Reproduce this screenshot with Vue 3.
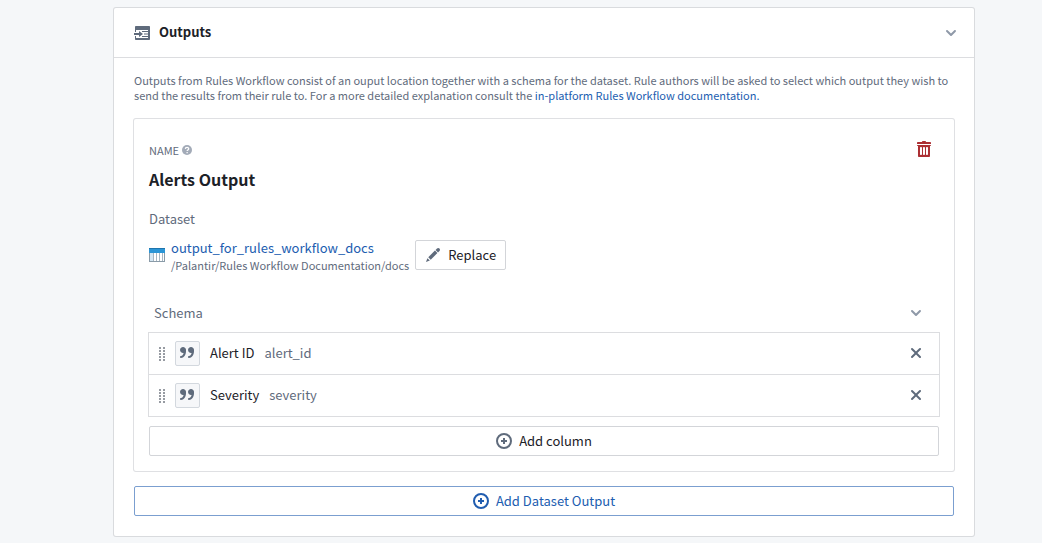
<script setup>
import { ref } from 'vue'

const open = ref(true)
const schemaOpen = ref(true)
const columns = ref([
  { label: 'Alert ID', key: 'alert_id' },
  { label: 'Severity', key: 'severity' },
])
const dots = [0, 1, 2, 3, 4]

function removeColumn(index) {
  columns.value.splice(index, 1)
}
</script>

<template>
  <main class="page">
    <section class="card">
      <header class="card-header">
        <svg class="icon muted" viewBox="0 0 16 16" aria-hidden="true">
          <path fill-rule="evenodd" d="M2 1h13c.55 0 1 .45 1 1v12c0 .55-.45 1-1 1H2c-.55 0-1-.45-1-1v-3h1v2h12V5H2v2H1V2c0-.55.45-1 1-1z" />
          <path d="M0 8h5V6l4 3-4 3v-2H0zM8 6h6v1H8zM10 8.500h4v1h-4zM8 11h6v1H8z" />
        </svg>
        <h2 class="card-title">Outputs</h2>
        <button class="icon-button" type="button" aria-label="Toggle outputs" :aria-expanded="open" @click="open = !open">
          <svg class="icon soft" viewBox="0 0 16 16" aria-hidden="true">
            <path d="M12 5c-.28 0-.53.11-.71.29L8 8.59l-3.29-3.3a1.003 1.003 0 00-1.42 1.42l4 4c.18.18.43.29.71.29s.53-.11.71-.29l4-4A1.003 1.003 0 0012 5z" />
          </svg>
        </button>
      </header>

      <div v-if="open" class="card-body">
        <p class="description">
          Outputs from Rules Workflow consist of an ouput location together with a schema for the dataset. Rule authors will be asked to select which output they wish to send the results from their rule to. For a more detailed explanation consult the <a href="#docs">in-platform Rules Workflow documentation.</a>
        </p>

        <article class="output">
          <div class="output-top">
            <div class="name">
              <span>NAME</span>
              <svg class="help" viewBox="0 0 16 16" aria-hidden="true">
                <circle cx="8" cy="8" r="8" />
                <path d="M5.300 6.200C5.400 2.800 10.800 2.900 10.700 6c0 1.900-2.500 2-2.500 3.700" />
                <path d="M8.200 11.200v2" />
              </svg>
            </div>
            <button class="icon-button" type="button" aria-label="Delete output">
              <svg class="icon danger" viewBox="0 0 16 16" aria-hidden="true">
                <path fill-rule="evenodd" d="M14.490 3.990h-13c-.28 0-.5.22-.5.5s.22.5.5.5h.5v10c0 .55.45 1 1 1h10c.55 0 1-.45 1-1v-10h.5c.28 0 .5-.22.5-.5s-.22-.5-.5-.5zm-8.500 9c0 .55-.45 1-1 1s-1-.45-1-1v-6c0-.55.45-1 1-1s1 .45 1 1v6zm3 0c0 .55-.45 1-1 1s-1-.45-1-1v-6c0-.55.45-1 1-1s1 .45 1 1v6zm3 0c0 .55-.45 1-1 1s-1-.45-1-1v-6c0-.55.45-1 1-1s1 .45 1 1v6z" />
                <path d="M14 1h-4c0-.55-.45-1-1-1H7c-.55 0-1 .45-1 1H2c-.55 0-1 .45-1 1v1h14V2c0-.55-.45-1-1-1z" />
              </svg>
            </button>
          </div>
          <h3 class="output-title">Alerts Output</h3>
          <div class="label">Dataset</div>

          <div class="dataset">
            <svg class="icon" viewBox="0 0 16 16" aria-hidden="true">
              <path fill="#8a9ba8" d="M0 1h16v14H0z" />
              <path fill="#fff" d="M1 6h14v8H1z" />
              <path fill="#d3e6f3" d="M1 6h3v8H1z" />
              <path fill="#2b95d6" d="M0 1h16v5H0z" />
              <path fill="#1f75ad" d="M0 1h16v1H0z" />
              <path fill="#a7b6c2" d="M4 6h1v8H4zM7 6h1v8H7zM10 6h1v8h-1zM13 6h1v8h-1z" />
            </svg>
            <div class="dataset-text">
              <a class="dataset-name" href="#dataset">output_for_rules_workflow_docs</a>
              <span class="dataset-path">/Palantir/Rules Workflow Documentation/docs</span>
            </div>
            <button class="button" type="button">
              <svg class="icon muted" viewBox="0 0 16 16" aria-hidden="true">
                <path d="M3.250 10.260l2.470 2.470 6.690-6.690-2.460-2.480-6.700 6.700zM.99 14.990l3.860-1.390-2.460-2.440L.99 14.990zm12.250-14c-.48 0-.92.2-1.240.51l-1.440 1.440 2.470 2.470 1.440-1.440c.32-.32.51-.75.51-1.240.01-.95-.77-1.740-1.740-1.740z" />
              </svg>
              Replace
            </button>
          </div>

          <div class="schema-header">
            <span>Schema</span>
            <button class="icon-button" type="button" aria-label="Toggle schema" :aria-expanded="schemaOpen" @click="schemaOpen = !schemaOpen">
              <svg class="icon soft" viewBox="0 0 16 16" aria-hidden="true">
                <path d="M12 5c-.28 0-.53.11-.71.29L8 8.59l-3.29-3.3a1.003 1.003 0 00-1.42 1.42l4 4c.18.18.43.29.71.29s.53-.11.71-.29l4-4A1.003 1.003 0 0012 5z" />
              </svg>
            </button>
          </div>

          <ul v-if="schemaOpen" class="columns">
            <li v-for="(column, index) in columns" :key="column.key" class="column">
              <svg class="icon handle" viewBox="0 0 16 16" aria-hidden="true">
                <path v-for="n in dots" :key="n" :d="`M5 ${n * 3 + 1}h2v2H5zM9 ${n * 3 + 1}h2v2H9z`" />
              </svg>
              <span class="type">
                <svg class="icon muted" viewBox="0 0 16 16" aria-hidden="true">
                  <path d="M15.020 5c0-1.660-1.340-3-3-3s-3 1.340-3 3a2.996 2.996 0 003.600 2.940C12.100 9.760 11.140 11 10.020 11c-.55 0-1 .45-1 1s.45 1 1 1c2.760 0 5-3.130 5-7 0-.2-.02-.39-.04-.58.02-.14.04-.28.04-.42zm-11-3c-1.660 0-3 1.340-3 3a2.996 2.996 0 003.600 2.940C4.100 9.760 3.140 11 2.020 11c-.55 0-1 .45-1 1s.45 1 1 1c2.760 0 5-3.130 5-7 0-.2-.02-.39-.04-.58.02-.14.04-.28.04-.42 0-1.660-1.350-3-3-3z" />
                </svg>
              </span>
              <span class="column-label">{{ column.label }}</span>
              <span class="column-key">{{ column.key }}</span>
              <button class="icon-button remove" type="button" :aria-label="`Remove ${column.label}`" @click="removeColumn(index)">
                <svg class="icon muted" viewBox="0 0 16 16" aria-hidden="true">
                  <path d="M9.410 8l3.290-3.290c.19-.18.3-.43.3-.71a1.003 1.003 0 00-1.710-.71L8 6.590l-3.290-3.300a1.003 1.003 0 00-1.420 1.420L6.590 8 3.300 11.290c-.19.18-.3.43-.3.71a1.003 1.003 0 001.710.71L8 9.410l3.290 3.290c.18.19.43.3.71.3a1.003 1.003 0 00.71-1.710L9.410 8z" />
                </svg>
              </button>
            </li>
          </ul>

          <button class="button wide" type="button">
            <svg class="icon muted line" viewBox="0 0 16 16" aria-hidden="true">
              <circle cx="8" cy="8" r="7" />
              <path d="M8 5v6M5 8h6" />
            </svg>
            Add column
          </button>
        </article>

        <button class="button wide primary" type="button">
          <svg class="icon line" viewBox="0 0 16 16" aria-hidden="true">
            <circle cx="8" cy="8" r="7" />
            <path d="M8 5v6M5 8h6" />
          </svg>
          Add Dataset Output
        </button>
      </div>
    </section>
  </main>
</template>

<style>
html,
body {
  background: #f5f7f9;
}
</style>

<style scoped>
.page {
  padding: 8px 68px 7px 114px;
  color: #1c2127;
  font-family: "Noto Sans CJK SC", "Noto Sans", sans-serif;
  font-size: 13px;
  line-height: 18px;
}
.card {
  background: #fff;
  border-radius: 2px;
  box-shadow: 0 0 0 1px #d9dbde;
}
.card-header {
  display: flex;
  align-items: center;
  gap: 9px;
  height: 49px;
  padding: 0 15px 0 20px;
  border-bottom: 1px solid #dcdde0;
}
.card-title {
  flex: 1;
  margin: 0;
  padding-bottom: 1px;
  font-size: 13px;
  font-weight: 700;
}
.icon {
  display: block;
  flex: none;
  width: 16px;
  height: 16px;
  fill: currentColor;
}
.muted {
  color: #5f6b7c;
}
.soft {
  color: #8f99a8;
}
.danger {
  color: #ac2f33;
}
.line {
  fill: none;
  stroke: currentColor;
  stroke-width: 2;
}
.icon-button {
  padding: 0;
  border: 0;
  background: none;
  cursor: pointer;
}
.card-body {
  padding: 15px 20px 20px;
}
.description {
  margin: 0 0 16px;
  color: #5f6b7c;
  font-size: 11px;
  line-height: 15px;
}
a {
  color: #215db0;
  text-decoration: none;
}
.output {
  margin-bottom: 15px;
  padding: 15px;
  border-radius: 2px;
  box-shadow: 0 0 0 1px #dfe0e3;
}
.output-top {
  display: flex;
  align-items: center;
  justify-content: space-between;
  height: 30px;
  padding-right: 7px;
}
.name {
  display: flex;
  align-items: center;
  gap: 3px;
  padding-top: 2px;
  color: #5f6b7c;
  font-size: 11px;
}
.help {
  width: 10px;
  height: 10px;
  fill: #a3abb8;
}
.help path {
  fill: none;
  stroke: #fff;
  stroke-width: 2;
}
.output-title {
  margin: 3px 0 0;
  font-size: 16px;
  font-weight: 700;
  line-height: 24px;
}
.label {
  margin-top: 19px;
  color: #5f6b7c;
}
.dataset {
  display: flex;
  align-items: center;
  margin-top: 9px;
}
.dataset-text {
  display: flex;
  flex-direction: column;
  margin: 0 6px;
  padding-top: 2px;
}
.dataset-name {
  line-height: 18px;
}
.dataset-path {
  color: #5f6b7c;
  font-size: 11px;
  line-height: 16px;
}
.button {
  display: flex;
  align-items: center;
  justify-content: center;
  gap: 7px;
  height: 30px;
  padding: 0 9px;
  border: 1px solid #d3d5d9;
  border-radius: 2px;
  background: #fff;
  color: #1c2127;
  font: inherit;
  cursor: pointer;
}
.wide {
  width: 100%;
}
.primary {
  border-color: #7b9fd0;
  color: #215db0;
}
.schema-header {
  display: flex;
  align-items: center;
  justify-content: space-between;
  margin-top: 31px;
  padding: 0 15px 0 5px;
  color: #5f6b7c;
}
.columns {
  margin: 11px 0 10px;
  padding: 0;
  list-style: none;
  box-shadow: 0 0 0 1px #dcdde0;
}
.column {
  display: flex;
  align-items: center;
  height: 41px;
  padding: 0 15px 0 5px;
}
.column + .column {
  border-top: 1px solid #dcdde0;
}
.handle {
  color: #979ba2;
}
.type {
  display: grid;
  place-items: center;
  box-sizing: border-box;
  width: 25px;
  height: 25px;
  margin: 0 10px 0 5px;
  padding: 0 1px 1px 0;
  border: 1px solid #d3d8de;
  border-radius: 2px;
  background: #f6f7f9;
}
.column-label,
.column-key {
  padding-bottom: 2px;
}
.column-key {
  flex: 1;
  margin-left: 10px;
  color: #5f6b7c;
}
.remove {
  padding-bottom: 1px;
}
</style>
